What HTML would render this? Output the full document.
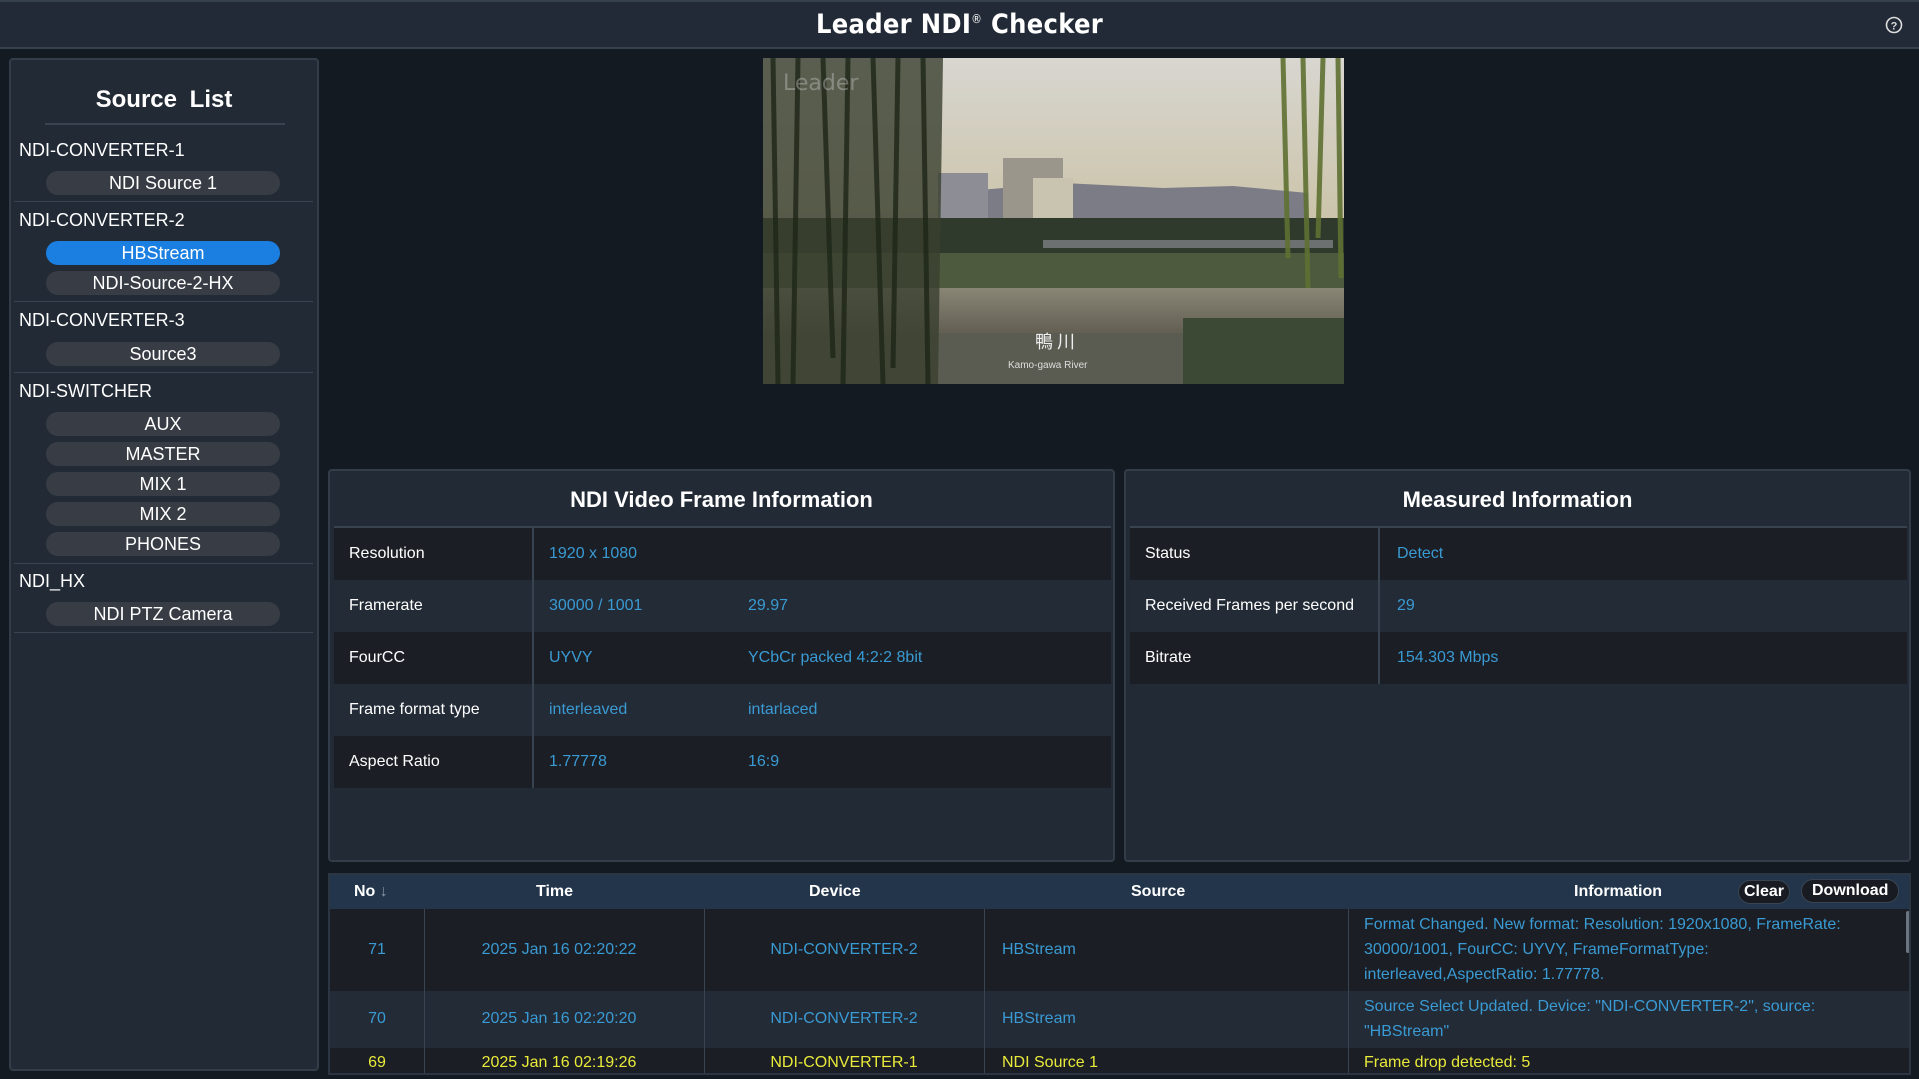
<!DOCTYPE html>
<html><head><meta charset="utf-8"><style>
*{box-sizing:border-box;margin:0;padding:0}
body{width:1919px;height:1079px;background:#141a21;font-family:"Liberation Sans",sans-serif;color:#fff;position:relative;overflow:hidden;font-size:16px}
.a{position:absolute}
#hdr{left:0;top:0;width:1919px;height:49px;background:#212a36;border-top:2px solid #36414e;border-bottom:2px solid #36414e}
#hdr .t{position:absolute;left:0;width:100%;top:7px;text-align:center;font-family:"DejaVu Sans Condensed","DejaVu Sans",sans-serif;font-size:27px;font-weight:bold;letter-spacing:0.3px}
#side{left:9px;top:58px;width:310px;height:1013px;background:#222a35;border:2px solid #333d49;border-radius:4px}
.lbl{position:absolute;left:8px;font-size:18px;color:#fff}
.pill{position:absolute;left:35px;width:234px;height:24px;border-radius:12px;background:#383d45;text-align:center;font-size:18px;line-height:24px}
.pill.on{background:#1a7fe0}
.sep{position:absolute;left:3px;width:299px;height:1px;background:#3a4451}
.panel{background:#222a35;border:2px solid #333d49;border-radius:4px}
.ptitle{position:absolute;left:0;width:100%;top:16px;text-align:center;font-size:22px;font-weight:bold}
.row{position:absolute;left:4px;height:52px;font-size:16px;line-height:52px}
.row span{position:absolute}
.v{color:#3a9ad3}
.y{color:#e9ea3a}
</style></head><body>
<div id="hdr" class="a"><div class="t">Leader NDI<sup style="font-size:12px;font-weight:normal;vertical-align:10px">®</sup> Checker</div>
<svg class="a" style="left:1885px;top:14px" width="18" height="18" viewBox="0 0 18 18"><circle cx="9" cy="9" r="7.5" fill="none" stroke="#ddd" stroke-width="1.6"/><text x="9" y="13.3" text-anchor="middle" font-family="Liberation Sans" font-weight="bold" font-size="11" fill="#ddd">?</text></svg>
</div>

<div id="side" class="a">
<div class="a" style="left:0;width:100%;top:26px;text-align:center;font-size:24px;font-weight:bold;word-spacing:6px">Source List</div>
<div class="a" style="left:34px;top:63px;width:240px;height:2px;background:#3a4451"></div>
<div class="lbl" style="top:80px">NDI-CONVERTER-1</div>
<div class="pill" style="top:111px">NDI Source 1</div>
<div class="sep" style="top:141px"></div>
<div class="lbl" style="top:150px">NDI-CONVERTER-2</div>
<div class="pill on" style="top:181px">HBStream</div>
<div class="pill" style="top:211px">NDI-Source-2-HX</div>
<div class="sep" style="top:241px"></div>
<div class="lbl" style="top:250px">NDI-CONVERTER-3</div>
<div class="pill" style="top:282px">Source3</div>
<div class="sep" style="top:312px"></div>
<div class="lbl" style="top:321px">NDI-SWITCHER</div>
<div class="pill" style="top:352px">AUX</div>
<div class="pill" style="top:382px">MASTER</div>
<div class="pill" style="top:412px">MIX 1</div>
<div class="pill" style="top:442px">MIX 2</div>
<div class="pill" style="top:472px">PHONES</div>
<div class="sep" style="top:503px"></div>
<div class="lbl" style="top:511px">NDI_HX</div>
<div class="pill" style="top:542px">NDI PTZ Camera</div>
<div class="sep" style="top:572px"></div>
</div>

<svg class="a" style="left:763px;top:58px" width="581" height="326" viewBox="0 0 581 326">
<defs><linearGradient id="sky" x1="0" y1="0" x2="0" y2="1"><stop offset="0" stop-color="#d8d6d0"/><stop offset="0.6" stop-color="#c9c0a2"/><stop offset="1" stop-color="#a9a7a0"/></linearGradient>
<linearGradient id="riv" x1="0" y1="0" x2="0" y2="1"><stop offset="0" stop-color="#8a8676"/><stop offset="1" stop-color="#5e5a4e"/></linearGradient></defs>
<rect width="581" height="326" fill="url(#sky)"/>
<path d="M180 135 L300 125 L400 130 L470 128 L545 135 L545 160 L180 160Z" fill="#7b7c86"/>
<rect x="240" y="100" width="60" height="65" fill="#9a968c"/>
<rect x="270" y="120" width="40" height="45" fill="#c9c4b0"/>
<rect x="175" y="115" width="50" height="50" fill="#8d8e95"/>
<rect x="0" y="160" width="581" height="40" fill="#2f3a2c"/>
<rect x="280" y="182" width="290" height="8" fill="#6d7070"/>
<rect x="0" y="195" width="581" height="40" fill="#4d5a3e"/>
<rect x="0" y="230" width="581" height="50" fill="url(#riv)"/>
<rect x="0" y="275" width="581" height="51" fill="#5a5c52"/>
<rect x="420" y="260" width="161" height="66" fill="#3c4934"/>
<path d="M0 0 L180 0 L175 326 L0 326Z" fill="#3a4030" opacity="0.8"/>
<g stroke="#1e2618" stroke-width="5" opacity="0.8">
<path d="M10 0 L15 326M35 0 L30 326M60 0 L70 300M85 0 L80 326M110 0 L120 326M135 0 L130 310M160 0 L165 326"/></g>
<g stroke="#5f7132" stroke-width="5" opacity="0.9"><path d="M520 0 L525 200M540 0 L545 230M560 0 L555 180M575 0 L578 220"/></g>
<text x="272" y="290" font-family="Noto Sans CJK JP,sans-serif" font-size="18" fill="#eee">鴨 川</text>
<text x="245" y="310" font-family="Liberation Sans,sans-serif" font-size="10" fill="#ddd">Kamo-gawa River</text>
<text x="20" y="32" font-family="DejaVu Sans,sans-serif" font-size="22" fill="#ddd" opacity="0.35">Leader</text>
</svg>

<div class="a panel" style="left:328px;top:469px;width:787px;height:393px">
<div class="ptitle">NDI Video Frame Information</div>
<div class="a" style="left:4px;top:55px;width:777px;height:2px;background:#384350"></div>
<div class="row" style="top:57px;width:777px;background:#1b1f25"><span style="left:15px">Resolution</span><span class="v" style="left:215px">1920 x 1080</span></div>
<div class="row" style="top:109px;width:777px;background:#232b36"><span style="left:15px">Framerate</span><span class="v" style="left:215px">30000 / 1001</span><span class="v" style="left:414px">29.97</span></div>
<div class="row" style="top:161px;width:777px;background:#1b1f25"><span style="left:15px">FourCC</span><span class="v" style="left:215px">UYVY</span><span class="v" style="left:414px">YCbCr packed 4:2:2 8bit</span></div>
<div class="row" style="top:213px;width:777px;background:#232b36"><span style="left:15px">Frame format type</span><span class="v" style="left:215px">interleaved</span><span class="v" style="left:414px">intarlaced</span></div>
<div class="row" style="top:265px;width:777px;background:#1b1f25"><span style="left:15px">Aspect Ratio</span><span class="v" style="left:215px">1.77778</span><span class="v" style="left:414px">16:9</span></div>
<div class="a" style="left:202px;top:57px;width:2px;height:260px;background:#384350"></div>
</div>

<div class="a panel" style="left:1124px;top:469px;width:787px;height:393px">
<div class="ptitle">Measured Information</div>
<div class="a" style="left:4px;top:55px;width:777px;height:2px;background:#384350"></div>
<div class="row" style="top:57px;width:777px;background:#1b1f25"><span style="left:15px">Status</span><span class="v" style="left:267px">Detect</span></div>
<div class="row" style="top:109px;width:777px;background:#232b36"><span style="left:15px">Received Frames per second</span><span class="v" style="left:267px">29</span></div>
<div class="row" style="top:161px;width:777px;background:#1b1f25"><span style="left:15px">Bitrate</span><span class="v" style="left:267px">154.303 Mbps</span></div>
<div class="a" style="left:252px;top:57px;width:2px;height:156px;background:#384350"></div>
</div>

<div class="a" style="left:328px;top:873px;width:1583px;height:202px;background:#1b1f25;border:2px solid #2c3643;overflow:hidden">
<div class="a" style="left:0;top:0;width:1583px;height:34px;background:#22354b;font-weight:bold;font-size:16px;line-height:34px">
<span class="a" style="left:24px">No <span style="color:#8a97a6;font-weight:normal">↓</span></span>
<span class="a" style="left:206px">Time</span>
<span class="a" style="left:479px">Device</span>
<span class="a" style="left:801px">Source</span>
<span class="a" style="left:1244px">Information</span>
<span class="a" style="left:1408px;top:5px;height:24px;line-height:22px;padding:0 5px;border-radius:12px;background:#181c22;border:1px solid #3a4451">Clear</span>
<span class="a" style="left:1471px;top:4px;height:24px;line-height:22px;padding:0 10px;border-radius:12px;background:#181c22;border:1px solid #3a4451">Download</span>
</div>
<div class="a" style="left:0;top:34px;width:1583px;height:82px;background:#1b1f25"></div>
<div class="a" style="left:0;top:116px;width:1583px;height:57px;background:#232b36"></div>
<div class="a" style="left:94px;top:34px;width:1px;height:170px;background:#3a4451"></div>
<div class="a" style="left:374px;top:34px;width:1px;height:170px;background:#3a4451"></div>
<div class="a" style="left:654px;top:34px;width:1px;height:170px;background:#3a4451"></div>
<div class="a" style="left:1018px;top:34px;width:1px;height:170px;background:#3a4451"></div>
<div class="a v" style="top:66px;left:0;width:94px;text-align:center">71</div>
<div class="a v" style="top:66px;left:94px;width:280px;text-align:center;padding-right:10px">2025 Jan 16 02:20:22</div>
<div class="a v" style="top:66px;left:374px;width:280px;text-align:center">NDI-CONVERTER-2</div>
<div class="a v" style="top:66px;left:672px">HBStream</div>
<div class="a v" style="top:37px;left:1034px;width:505px;line-height:25px">Format Changed. New format: Resolution: 1920x1080, FrameRate: 30000/1001, FourCC: UYVY, FrameFormatType: interleaved,AspectRatio: 1.77778.</div>
<div class="a v" style="top:135px;left:0;width:94px;text-align:center">70</div>
<div class="a v" style="top:135px;left:94px;width:280px;text-align:center;padding-right:10px">2025 Jan 16 02:20:20</div>
<div class="a v" style="top:135px;left:374px;width:280px;text-align:center">NDI-CONVERTER-2</div>
<div class="a v" style="top:135px;left:672px">HBStream</div>
<div class="a v" style="top:119px;left:1034px;width:505px;line-height:25px">Source Select Updated. Device: "NDI-CONVERTER-2", source: "HBStream"</div>
<div class="a y" style="top:179px;left:0;width:94px;text-align:center">69</div>
<div class="a y" style="top:179px;left:94px;width:280px;text-align:center;padding-right:10px">2025 Jan 16 02:19:26</div>
<div class="a y" style="top:179px;left:374px;width:280px;text-align:center">NDI-CONVERTER-1</div>
<div class="a y" style="top:179px;left:672px">NDI Source 1</div>
<div class="a y" style="top:179px;left:1034px">Frame drop detected: 5</div>
<div class="a" style="left:1576px;top:36px;width:4px;height:42px;background:#6b7480;border-radius:2px"></div>
</div>
</body></html>
